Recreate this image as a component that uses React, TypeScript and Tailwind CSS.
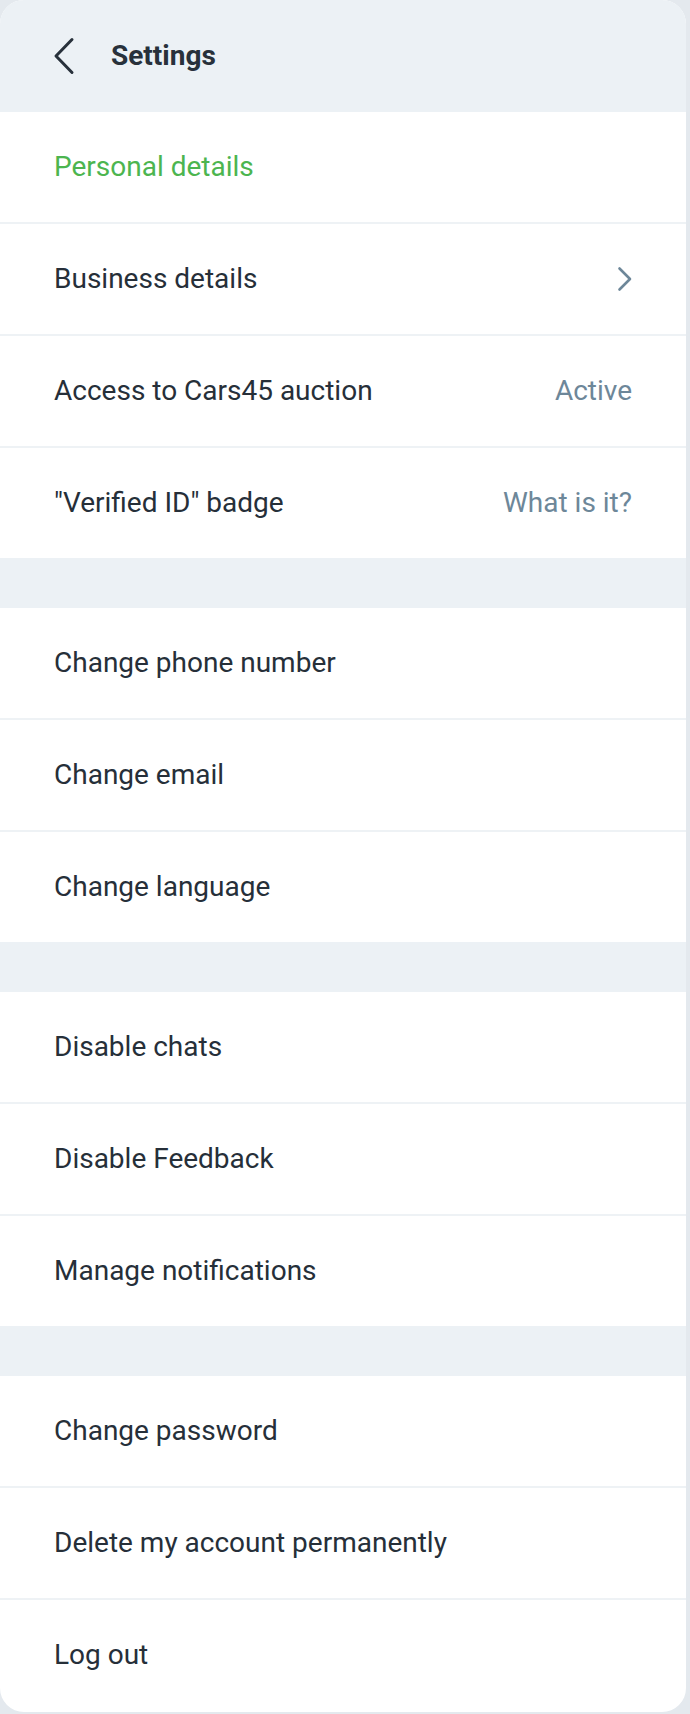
import { Fragment } from "react";

type Row = {
  label: string;
  accent?: boolean;
  value?: string;
  chevron?: boolean;
};

const sections: Row[][] = [
  [
    { label: "Personal details", accent: true },
    { label: "Business details", chevron: true },
    { label: "Access to Cars45 auction", value: "Active" },
    { label: '"Verified ID" badge', value: "What is it?" },
  ],
  [{ label: "Change phone number" }, { label: "Change email" }, { label: "Change language" }],
  [{ label: "Disable chats" }, { label: "Disable Feedback" }, { label: "Manage notifications" }],
  [{ label: "Change password" }, { label: "Delete my account permanently" }, { label: "Log out" }],
];

function SettingsRow({ row }: { row: Row }) {
  return (
    <div className="box-content h-[110px] px-[54px] flex items-center justify-between">
      <span className={`text-[28px] ${row.accent ? "text-[#4cb54f]" : "text-[#262f39]"}`}>{row.label}</span>
      {row.value && <span className="text-[28px] text-[#6d8799]">{row.value}</span>}
      {row.chevron && (
        <svg className="w-[16px] h-[26px] mr-[-1px]" viewBox="0 0 16 26" fill="none">
          <path d="M2.5 2.5 L13 13 L2.5 23.5" stroke="#6d8799" strokeWidth={2.6} strokeLinecap="round" strokeLinejoin="round" />
        </svg>
      )}
    </div>
  );
}

export default function App() {
  return (
    <div className="w-[690px] h-[1714px] bg-[#e4e9ee]" style={{ fontFamily: "Roboto, 'Noto Sans', sans-serif" }}>
      <div className="w-[686px] bg-white rounded-[24px] overflow-hidden flex flex-col pb-[2px]">
        {/* Header */}
        <div className="h-[112px] bg-[#ecf1f5] flex items-center pl-[52px] shrink-0">
          <svg className="w-[24px] h-[38px]" viewBox="0 0 24 38" fill="none">
            <path d="M20 2.5 L4 19 L20 35.5" stroke="#28313b" strokeWidth={3} strokeLinecap="round" strokeLinejoin="round" />
          </svg>
          <h1 className="ml-[35px] text-[28px] font-bold text-[#28313b] leading-none">Settings</h1>
        </div>

        {sections.map((rows, i) => (
          <Fragment key={i}>
            {i > 0 && <div className="h-[50px] bg-[#ecf1f5] shrink-0" />}
            <div className="flex flex-col divide-y-2 divide-[#eef2f5]">
              {rows.map((row) => (
                <SettingsRow key={row.label} row={row} />
              ))}
            </div>
          </Fragment>
        ))}
      </div>
    </div>
  );
}
